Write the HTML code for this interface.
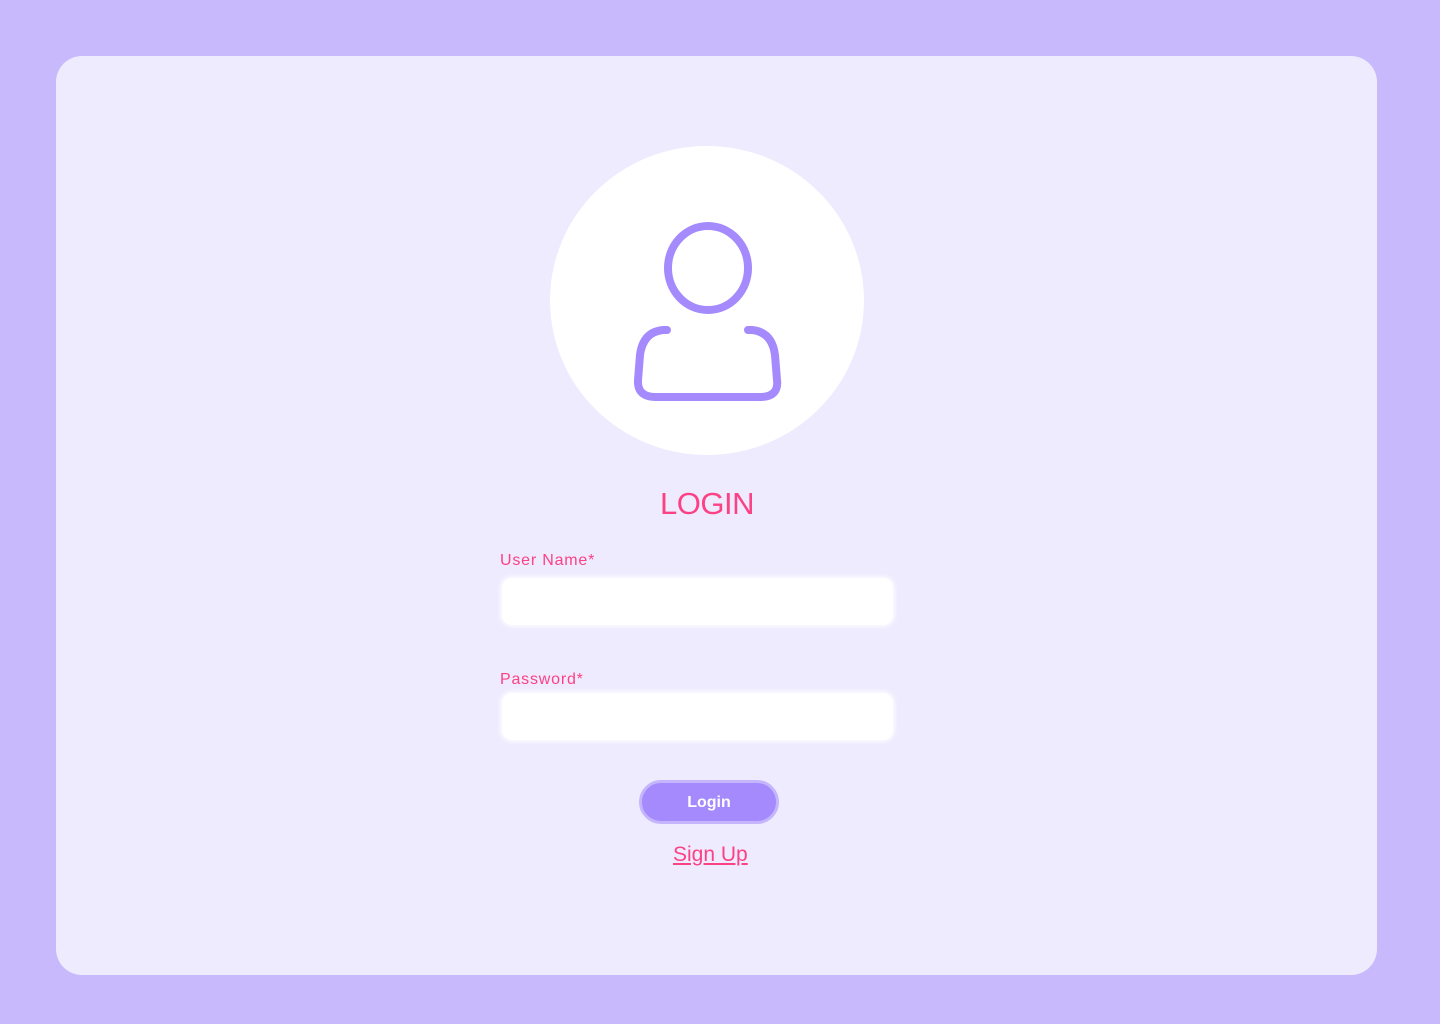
<!DOCTYPE html>
<html><head><style>
body{margin:0;width:1440px;height:1024px;background:#c8b9fd;font-family:"Liberation Sans",sans-serif;position:relative;overflow:hidden}
.card{position:absolute;left:56px;top:56px;width:1321px;height:919px;background:#eeebfe;border-radius:26px}
.circ{position:absolute;left:550px;top:146px;width:314px;height:309px;border-radius:50%;background:#fff}
.t{position:absolute;color:#fc4184}
.inp{position:absolute;left:502px;width:391px;height:47px;background:#fff;border-radius:10px;box-shadow:0 0 4px 2px rgba(255,255,255,.8)}
.btn{position:absolute;left:639px;top:780px;width:134px;height:38px;border-radius:22px;background:#a48afd;border:3px solid #c4b5fc;color:#fff;font-weight:bold;font-size:16px;text-align:center;line-height:40px}
</style></head><body>
<div class="card"></div>
<div class="circ"></div>
<svg style="position:absolute;left:0;top:0" width="1440" height="1024">
<g fill="none" stroke="#a48afd" stroke-width="8" stroke-linecap="round">
<ellipse cx="708" cy="268" rx="40" ry="42"/>
<path d="M667 330 H663 Q643 332 640 355 L638 380 Q637 397 656 397 H760 Q779 397 777 380 L775 355 Q772 332 752 330 H748"/>
</g></svg>
<div class="t" style="left:0;width:1414px;top:486px;text-align:center;font-size:31px;letter-spacing:-0.5px">LOGIN</div>
<div class="t" style="left:500px;top:552px;font-size:16px;letter-spacing:0.8px">User Name*</div>
<div class="inp" style="top:578px"></div>
<div class="t" style="left:500px;top:671px;font-size:16px;letter-spacing:0.8px">Password*</div>
<div class="inp" style="top:693px"></div>
<div class="btn">Login</div>
<div class="t" style="left:673px;top:843px;font-size:21px;text-decoration:underline">Sign Up</div>
</body></html>
